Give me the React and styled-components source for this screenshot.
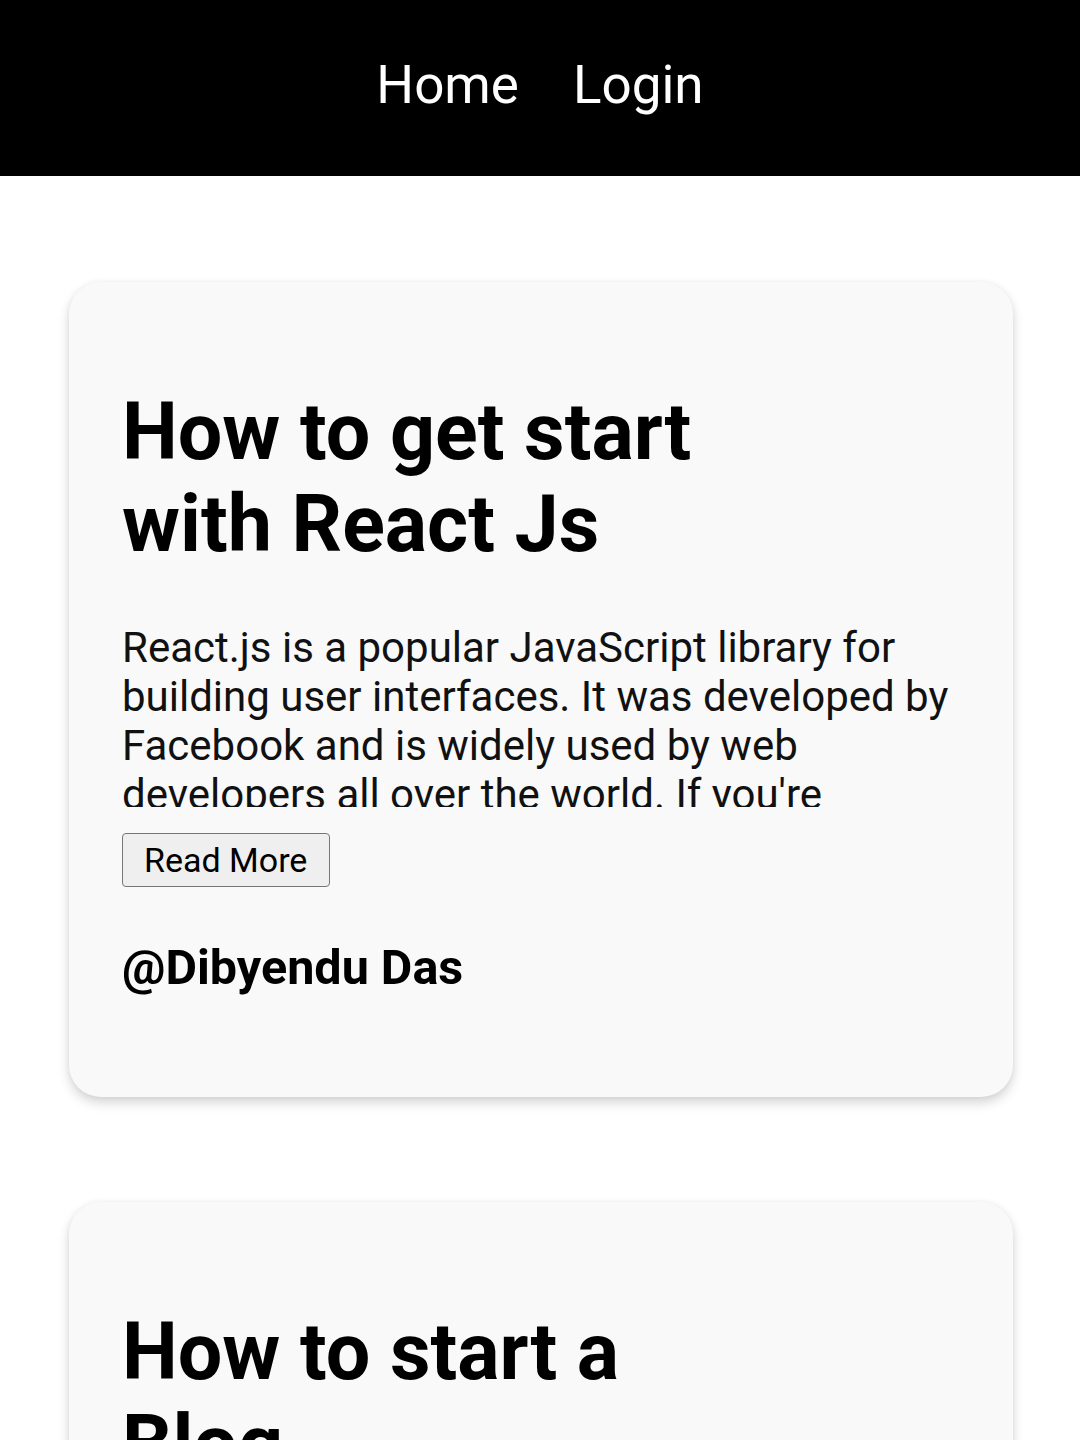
import React from 'react';
import styled, { createGlobalStyle } from 'styled-components';

const GlobalStyle = createGlobalStyle`
  body {
    margin: 0;
    background: #ffffff;
    font-family: Roboto, "Liberation Sans", sans-serif;
  }
`

const Navbar = styled.nav`
  height: 176px;
  background-color: #000;
  display: flex;
  justify-content: center;
  align-items: center;
  gap: 54px;
  padding-bottom: 6px;
  box-sizing: border-box;
`

const NavLink = styled.a`
  color: #fff;
  font-size: 53px;
  text-decoration: none;
  cursor: pointer;
`

const Feed = styled.main`
  display: flex;
  flex-direction: column;
  gap: 105px;
  padding: 106px 67px 0 69px;
`

const Card = styled.article`
  background-color: #f9f9f9;
  border-radius: 32px;
  box-shadow: 0 6px 12px rgba(0, 0, 0, 0.16), 0 0 6px rgba(0, 0, 0, 0.05);
  padding: 104px 53px 101px;
  display: flex;
  flex-direction: column;
  align-items: flex-start;
`

const Title = styled.h1`
  margin: 0;
  max-width: 620px;
  font-size: 79px;
  line-height: 92px;
  font-weight: 700;
  color: #000;
`

const Excerpt = styled.p`
  margin: 53px 0 0;
  font-size: 42px;
  color: #111;
  height: 184px;
  overflow: hidden;
`

const ReadMore = styled.button`
  margin-top: 26px;
  font-family: Roboto, "Liberation Sans", sans-serif;
  font-size: 34px;
  color: #000;
  padding: 6px 22px 6px 21px;
  background-color: #efefef;
  border: 1px solid #767676;
  border-radius: 4px;
`

const Author = styled.h3`
  margin: 52px 0 0;
  font-size: 48.5px;
  font-weight: 700;
  color: #000;
`

const posts = [
  {
    title: 'How to get start with React Js',
    body: "React.js is a popular JavaScript library for building user interfaces. It was developed by Facebook and is widely used by web developers all over the world. If you're interested in learning React, this guide will help you get started.",
    author: 'Dibyendu Das',
  },
  {
    title: 'How to start a Blog',
    body: 'Starting a blog is a great way to share your ideas with the world. In this post we go through choosing a platform, picking a topic and writing your first article.',
    author: 'Dibyendu Das',
  },
]

const App = () => {
  return (
    <>
      <GlobalStyle />
      <Navbar>
        <NavLink>Home</NavLink>
        <NavLink>Login</NavLink>
      </Navbar>
      <Feed>
        {posts.map((post, i) => (
          <Card key={i}>
            <Title>{post.title}</Title>
            <Excerpt>{post.body}</Excerpt>
            <ReadMore>Read More</ReadMore>
            <Author>@{post.author}</Author>
          </Card>
        ))}
      </Feed>
    </>
  );
};

export default App;
